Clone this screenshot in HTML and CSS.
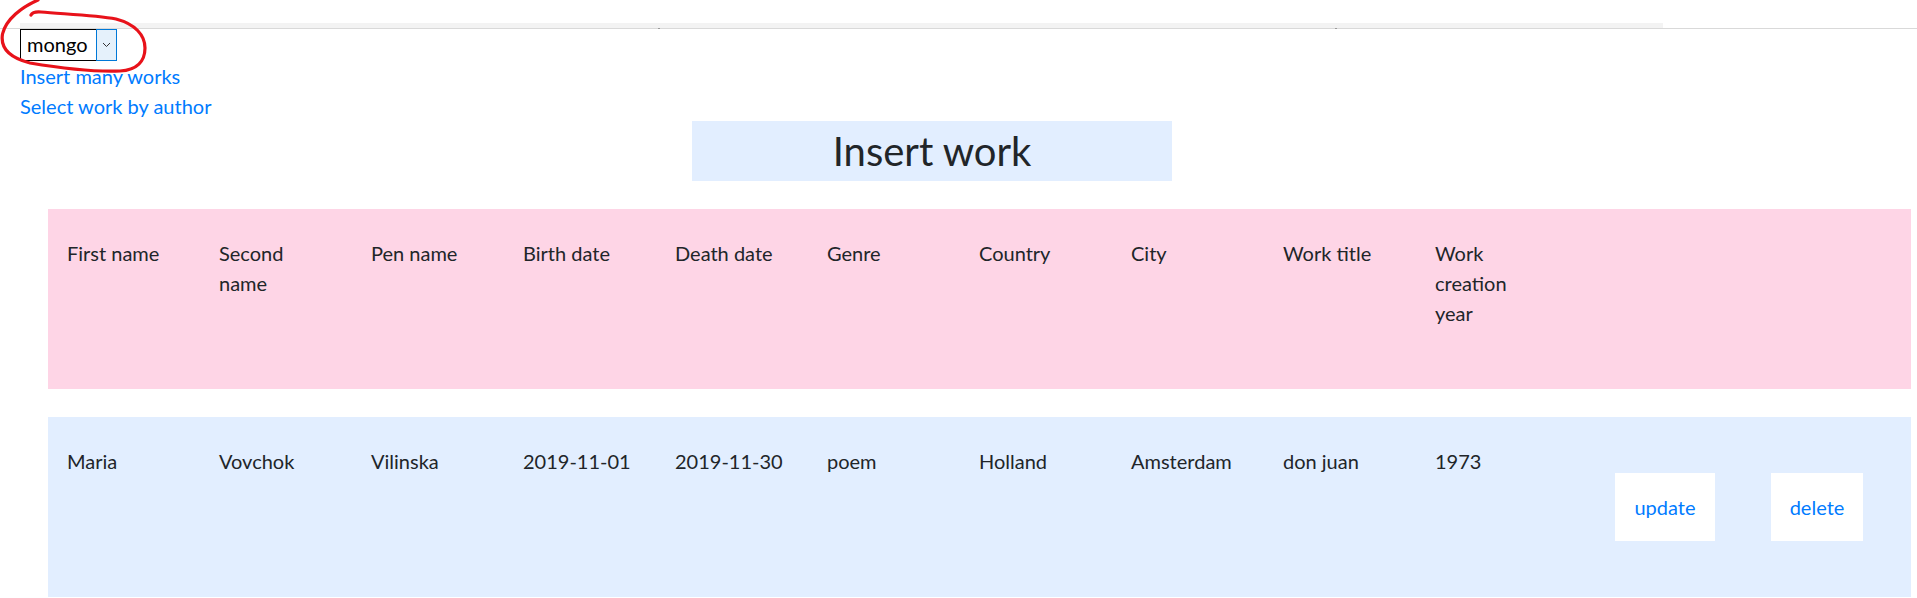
FILE: index.html
```html
<!DOCTYPE html>
<html lang="en">
<head>
<meta charset="utf-8">
<title>Insert work</title>
<link rel="stylesheet" href="styles.css">
</head>
<body>
<div class="topbar">
  <div class="strip"></div>
  <span class="tick tick-1"></span>
  <span class="tick tick-2"></span>
</div>
<div class="nav">
  <div class="select">
    <span class="sel-text">mongo</span>
    <span class="sel-btn">
      <svg width="9" height="6" viewBox="0 0 9 6"><path d="M1 1 L4.5 4.5 L8 1" fill="none" stroke="#333" stroke-width="1"/></svg>
    </span>
  </div>
  <a class="link" href="#">Insert many works</a>
  <a class="link" href="#">Select work by author</a>
</div>
<h2 class="title">Insert work</h2>
<div class="row row-head">
  <div class="cell">First name</div>
  <div class="cell">Second name</div>
  <div class="cell">Pen name</div>
  <div class="cell">Birth date</div>
  <div class="cell">Death date</div>
  <div class="cell">Genre</div>
  <div class="cell">Country</div>
  <div class="cell">City</div>
  <div class="cell">Work title</div>
  <div class="cell">Work creation year</div>
  <div class="spacer"></div>
  <div class="action"></div>
  <div class="action"></div>
</div>
<div class="row row-data">
  <div class="cell cell-data">Maria</div>
  <div class="cell cell-data">Vovchok</div>
  <div class="cell cell-data">Vilinska</div>
  <div class="cell cell-data">2019-11-01</div>
  <div class="cell cell-data">2019-11-30</div>
  <div class="cell cell-data">poem</div>
  <div class="cell cell-data">Holland</div>
  <div class="cell cell-data">Amsterdam</div>
  <div class="cell cell-data">don juan</div>
  <div class="cell cell-data">1973</div>
  <div class="spacer"></div>
  <div class="action"><button class="btn">update</button></div>
  <div class="action"><button class="btn">delete</button></div>
</div>
<svg class="annotation" width="150" height="76" viewBox="0 0 150 76">
  <path d="M38 0 C22 7 6 19 2.5 34 C0 49 10 58 30 63 C60 68 95 72 120 71 C137 70 145 61 145 48 C145 35 135 24 116 19 C95 15 62 14 41 12 C35 11.5 32 13 31 15" fill="none" stroke="#e8121a" stroke-width="3.2" stroke-linecap="round"/>
</svg>
</body>
</html>
```

FILE: styles.css
```css
* { box-sizing: border-box; }

html, body {
  margin: 0;
  padding: 0;
  background: #ffffff;
}

body {
  position: relative;
  font-family: Lato, "Open Sans", sans-serif;
  font-size: 20px;
  line-height: 30px;
  color: #212529;
}

.topbar {
  position: relative;
  margin-top: 23px;
  height: 6px;
  border-bottom: 1px solid #d9d9d9;
}

.strip {
  margin-left: 20px;
  width: 1643px;
  height: 5px;
  background: #f3f3f3;
}

.tick {
  position: absolute;
  top: 5px;
  width: 2px;
  height: 1px;
  background: #9a9a9a;
}
.tick-1 { left: 658px; }
.tick-2 { left: 1335px; }

.nav {
  padding-left: 20px;
}

.select {
  display: flex;
  width: 97px;
  height: 32px;
}

.sel-text {
  flex: 1;
  border: 1px solid #000;
  border-right: none;
  padding-left: 6px;
  font-size: 20px;
  line-height: 28px;
  color: #000;
}

.sel-btn {
  width: 21px;
  border: 1px solid #0078d7;
  background: #e5f1fb;
  display: flex;
  align-items: center;
  justify-content: center;
}

.link {
  display: block;
  width: max-content;
  color: #007bff;
  text-decoration: none;
  font-size: 20px;
  line-height: 30px;
}

.title {
  margin: 0 0 0 692px;
  width: 480px;
  height: 60px;
  background: #e2eeff;
  font-size: 40px;
  font-weight: 400;
  line-height: 60px;
  text-align: center;
  color: #212529;
}

.row {
  margin-left: 48px;
  width: 1863px;
  height: 180px;
  display: grid;
  grid-template-columns: repeat(10, 152px) 1fr repeat(2, 152px);
  padding-right: 18px;
}

.row-head {
  margin-top: 28px;
  background: #fed5e6;
}

.row-data {
  margin-top: 28px;
  background: #e2eeff;
}

.cell {
  padding: 29px 30px 0 19px;
}

.cell-data {
  white-space: nowrap;
}

.action {
  display: flex;
  align-items: center;
  justify-content: center;
}

.btn {
  border: none;
  background: #ffffff;
  color: #007bff;
  font-family: inherit;
  font-size: 20px;
  line-height: 30px;
  padding: 19px;
  margin: 0;
}

.annotation {
  position: absolute;
  top: 0;
  left: 0;
  pointer-events: none;
}
```
